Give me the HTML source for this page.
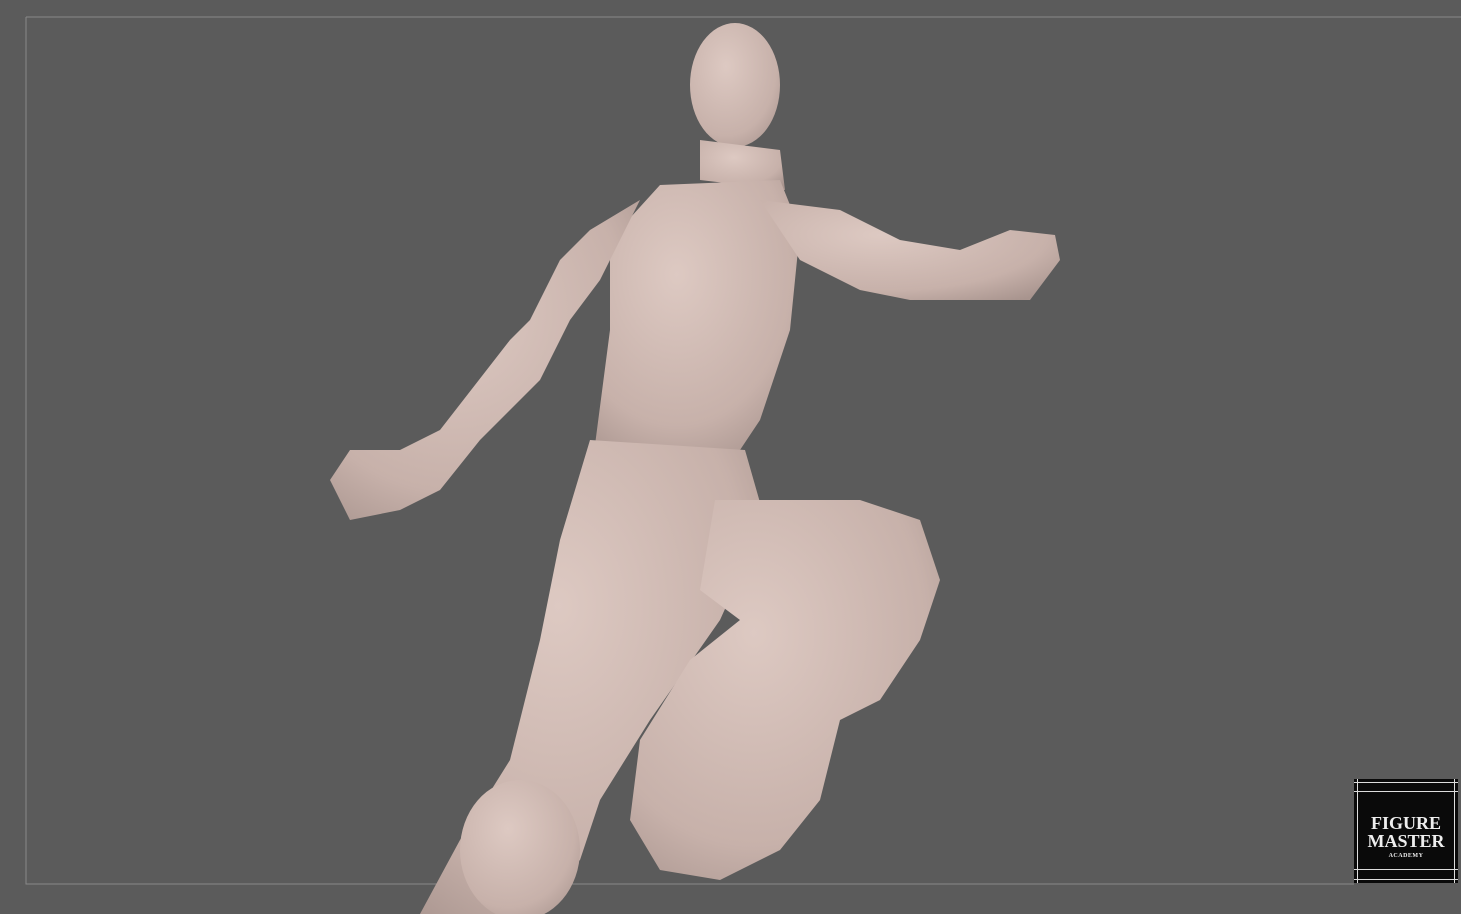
<!DOCTYPE html>
<html><head><meta charset="utf-8"><style>
html,body{margin:0;padding:0;width:1461px;height:914px;overflow:hidden;background:#5b5b5b}
svg{position:absolute;left:0;top:0}
.logo{position:absolute;left:1354px;top:779px;width:104px;height:104px;background:#0a0a0a;box-sizing:border-box}
.logo .t{position:absolute;left:0;right:0;text-align:center;color:#eee;font-family:"Liberation Serif",serif;font-weight:bold}
</style></head><body>
<svg width="1461" height="914" viewBox="0 0 1461 914">
<defs>
<radialGradient id="g" cx="0.4" cy="0.35" r="0.8">
<stop offset="0" stop-color="#ddc9c2"/><stop offset="0.7" stop-color="#c7b1aa"/><stop offset="1" stop-color="#a8948e"/>
</radialGradient>
</defs>
<path d="M26 17 H1461 M26 17 V884 H1354" stroke="#888" stroke-width="1" fill="none"/>
<g fill="url(#g)">
<ellipse cx="735" cy="85" rx="45" ry="62"/>
<path d="M700 140 L780 150 L785 190 L700 180 Z"/>
<path d="M660 185 L780 180 L800 230 L790 330 L760 420 L740 450 L595 445 L610 330 L610 240 Z"/>
<path d="M760 200 L840 210 L900 240 L960 250 L1010 230 L1055 235 L1060 260 L1030 300 L970 300 L910 300 L860 290 L800 260 Z"/>
<path d="M640 200 L590 230 L560 260 L530 320 L510 340 L440 430 L400 450 L350 450 L330 480 L350 520 L400 510 L440 490 L480 440 L540 380 L570 320 L600 280 L620 240 Z"/>
<path d="M590 440 L745 450 L765 520 L720 620 L650 720 L600 800 L580 860 L520 914 L420 914 L460 840 L510 760 L540 640 L560 540 Z"/>
<path d="M715 500 L860 500 L920 520 L940 580 L920 640 L880 700 L840 720 L820 800 L780 850 L720 880 L660 870 L630 820 L640 740 L690 660 L740 620 L700 590 Z"/>
<ellipse cx="520" cy="850" rx="60" ry="70"/>
</g>
</svg>
<div class="logo">
<div style="position:absolute;left:3px;right:3px;top:0;bottom:0;border-left:1px solid #ddd;border-right:1px solid #ddd"></div>
<div style="position:absolute;left:0;right:0;top:3px;border-top:1px solid #ddd"></div>
<div style="position:absolute;left:0;right:0;top:12px;border-top:1px solid #ddd"></div>
<div style="position:absolute;left:0;right:0;top:90px;border-top:1px solid #ddd"></div>
<div style="position:absolute;left:0;right:0;top:100px;border-top:1px solid #ddd"></div>
<div class="t" style="top:35px;font-size:18px;line-height:18px">FIGURE</div>
<div class="t" style="top:53px;font-size:18px;line-height:18px">MASTER</div>
<div class="t" style="top:74px;font-size:6px;line-height:6px;letter-spacing:0.5px">ACADEMY</div>
</div>
</body></html>
